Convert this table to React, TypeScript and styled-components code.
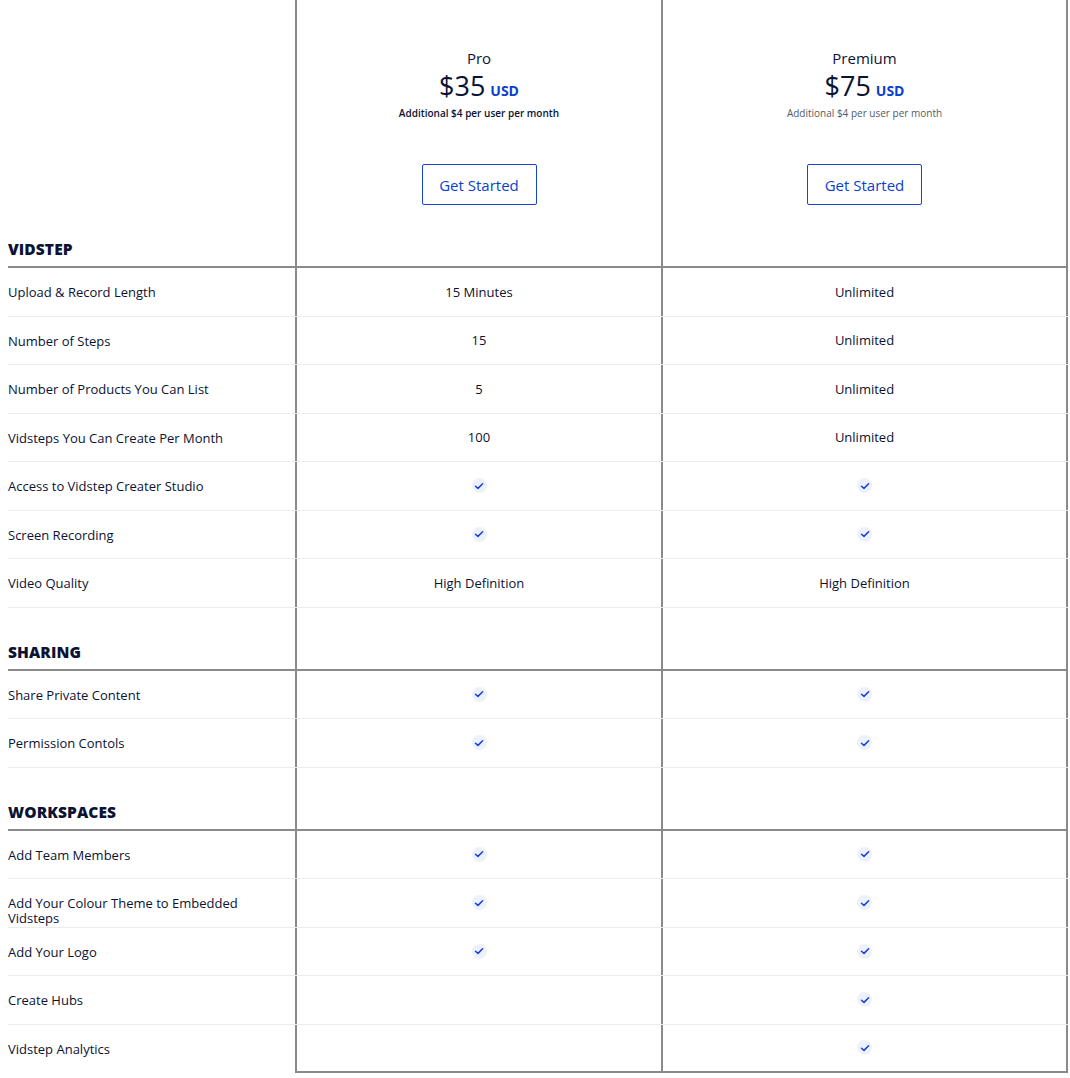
import styled, { createGlobalStyle } from "styled-components";

const GlobalStyle = createGlobalStyle`
    body {
        margin: 0;
        background: #ffffff;
        font-family: "Open Sans", "Liberation Sans", sans-serif;
        color: #0d1330;
    }
`

type Plan = {
    name: string
    price: string
    note: string
    noteLight: boolean
}

type Row = {
    label: string
    pro: string | boolean
    premium: string | boolean
}

type Section = {
    title: string
    rows: Row[]
    first?: boolean
}

const plans: Plan[] = [
    { name: "Pro", price: "$35", note: "Additional $4 per user per month", noteLight: false },
    { name: "Premium", price: "$75", note: "Additional $4 per user per month", noteLight: true },
]

const sections: Section[] = [
    {
        title: "VIDSTEP",
        first: true,
        rows: [
            { label: "Upload & Record Length", pro: "15 Minutes", premium: "Unlimited" },
            { label: "Number of Steps", pro: "15", premium: "Unlimited" },
            { label: "Number of Products You Can List", pro: "5", premium: "Unlimited" },
            { label: "Vidsteps You Can Create Per Month", pro: "100", premium: "Unlimited" },
            { label: "Access to Vidstep Creater Studio", pro: true, premium: true },
            { label: "Screen Recording", pro: true, premium: true },
            { label: "Video Quality", pro: "High Definition", premium: "High Definition" },
        ],
    },
    {
        title: "SHARING",
        rows: [
            { label: "Share Private Content", pro: true, premium: true },
            { label: "Permission Contols", pro: true, premium: true },
        ],
    },
    {
        title: "WORKSPACES",
        rows: [
            { label: "Add Team Members", pro: true, premium: true },
            { label: "Add Your Colour Theme to Embedded Vidsteps", pro: true, premium: true },
            { label: "Add Your Logo", pro: true, premium: true },
            { label: "Create Hubs", pro: false, premium: true },
            { label: "Vidstep Analytics", pro: false, premium: true },
        ],
    },
]

const Check = () => (
    <CheckBadge>
        <svg width="10" height="10" viewBox="0 0 10 10" fill="none">
            <path d="M1.5 5.2 L4 7.4 L8.6 2.8" stroke="#1a3fd6" strokeWidth="1.5" strokeLinecap="round" strokeLinejoin="round" />
        </svg>
    </CheckBadge>
)

const renderValue = (v: string | boolean) => {
    if (v === true) return <Check />
    if (v === false) return null
    return v
}

const App = () => {
    return (
        <>
            <GlobalStyle />
            <Tabla>
                {sections.map((section, si) => (
                    <SectionBlock key={section.title}>
                        <HeadRow tall={section.first}>
                            <SectionTitle>{section.title}</SectionTitle>
                            {section.first
                                ? plans.map((p, i) => (
                                    <PlanCell key={p.name} last={i === plans.length - 1}>
                                        <PlanName>{p.name}</PlanName>
                                        <PriceLine>
                                            <Price>{p.price}</Price>
                                            <Currency>USD</Currency>
                                        </PriceLine>
                                        <PlanNote light={p.noteLight}>{p.note}</PlanNote>
                                        <BotonStart type="button">Get Started</BotonStart>
                                    </PlanCell>
                                ))
                                : plans.map((p, i) => (
                                    <EmptyCell key={p.name} last={i === plans.length - 1} />
                                ))}
                        </HeadRow>
                        {section.rows.map((row, ri) => {
                            const lastRow = si === sections.length - 1 && ri === section.rows.length - 1
                            return (
                                <FeatureRow key={row.label} end={lastRow}>
                                    <LabelCell>{row.label}</LabelCell>
                                    <ValueCell end={lastRow}>{renderValue(row.pro)}</ValueCell>
                                    <ValueCell end={lastRow} last>{renderValue(row.premium)}</ValueCell>
                                </FeatureRow>
                            )
                        })}
                    </SectionBlock>
                ))}
            </Tabla>
        </>
    )
}

const Tabla = styled.div`
    width: 1060px;
    margin-left: 8px;
    display: flex;
    flex-direction: column;
`

const SectionBlock = styled.div`
    display: flex;
    flex-direction: column;
`

const grid = `
    display: grid;
    grid-template-columns: 287px 366px 407px;
`

type HeadProps = { tall?: boolean }

const HeadRow = styled.div<HeadProps>`
    ${grid}
    height: ${props => props.tall ? "268px" : "63px"};
    border-bottom: 2px solid #8a8a8a;
    box-sizing: border-box;
`

const SectionTitle = styled.div`
    display: flex;
    align-items: flex-end;
    padding-bottom: 6px;
    font-size: 15.5px;
    font-weight: 800;
    letter-spacing: 0.1px;
    color: #0b1233;
`

type LastProps = { last?: boolean }

const PlanCell = styled.div<LastProps>`
    display: flex;
    flex-direction: column;
    align-items: center;
    border-left: 2px solid #8a8a8a;
    border-right: ${props => props.last ? "2px solid #8a8a8a" : "none"};
    padding-top: 48px;
`

const EmptyCell = styled.div<LastProps>`
    border-left: 2px solid #8a8a8a;
    border-right: ${props => props.last ? "2px solid #8a8a8a" : "none"};
`

const PlanName = styled.div`
    font-size: 15px;
    line-height: 20px;
    color: #0b1233;
`

const PriceLine = styled.div`
    display: flex;
    align-items: baseline;
    gap: 5px;
    margin-top: 2px;
`

const Price = styled.span`
    font-size: 27px;
    line-height: 32px;
    color: #0b1233;
`

const Currency = styled.span`
    font-size: 14px;
    font-weight: 700;
    color: #0a3fd0;
`

type NoteProps = { light: boolean }

const PlanNote = styled.div<NoteProps>`
    margin-top: 4px;
    font-size: 10px;
    font-weight: ${props => props.light ? 400 : 600};
    color: ${props => props.light ? "#555a66" : "#0b1233"};
`

const BotonStart = styled.button`
    margin-top: 44px;
    width: 115px;
    height: 41px;
    background: #ffffff;
    border: 1px solid #1846c9;
    border-radius: 2px;
    color: #0a3fd0;
    font-family: inherit;
    font-size: 15px;
    font-weight: 500;
    cursor: pointer;
`

type EndProps = { end?: boolean }

const FeatureRow = styled.div<EndProps>`
    ${grid}
    height: 48.5px;
    box-sizing: border-box;
    border-bottom: ${props => props.end ? "none" : "1px solid #ececec"};
`

const LabelCell = styled.div`
    display: flex;
    align-items: flex-start;
    padding-top: 17px;
    font-size: 13px;
    line-height: 15px;
    color: #0b1233;
    padding-right: 40px;
`

type ValueProps = { last?: boolean, end?: boolean }

const ValueCell = styled.div<ValueProps>`
    display: flex;
    align-items: center;
    justify-content: center;
    font-size: 13px;
    color: #0b1233;
    border-left: 2px solid #8a8a8a;
    border-right: ${props => props.last ? "2px solid #8a8a8a" : "none"};
    border-bottom: ${props => props.end ? "2px solid #8a8a8a" : "none"};
`

const CheckBadge = styled.span`
    width: 15px;
    height: 15px;
    border-radius: 50%;
    background: #edf1fb;
    display: flex;
    align-items: center;
    justify-content: center;
`

export default App;
